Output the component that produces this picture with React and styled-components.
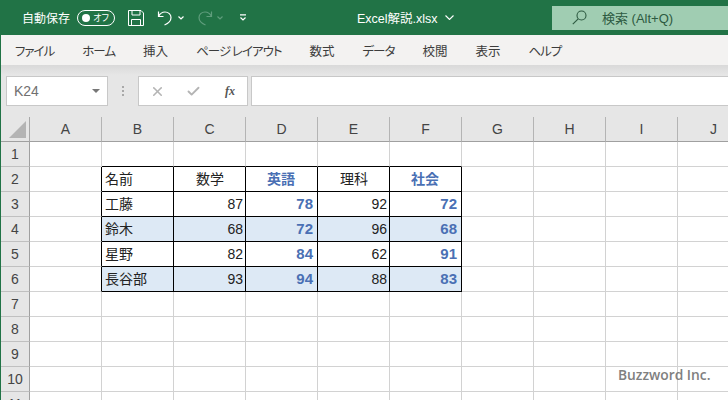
import React from 'react';
import styled, { createGlobalStyle } from 'styled-components';
import { X, Check } from 'lucide-react';

const GlobalStyle = createGlobalStyle`
  html, body {
    margin: 0;
    padding: 0;
    width: 728px;
    height: 400px;
    overflow: hidden;
    background: #fff;
    font-family: "Liberation Sans", "Noto Sans CJK JP", sans-serif;
  }
`;

const Page = styled.div`
  position: relative;
  width: 728px;
  height: 400px;
  overflow: hidden;
`;

const TitleBar = styled.div`
  display: flex;
  align-items: center;
  height: 35px;
  background: #217346;
  color: #fff;
`;

const AutoSave = styled.span`
  flex: none;
  width: 55px;
  margin-left: 22px;
  font: 12px "Noto Sans CJK JP", sans-serif;
`;

const Toggle = styled.div`
  flex: none;
  display: flex;
  align-items: center;
  justify-content: space-between;
  box-sizing: border-box;
  width: 38px;
  height: 16px;
  padding: 0 5px 0 4px;
  border: 1px solid #fff;
  border-radius: 8px;
  font: 9px "Noto Sans CJK JP", sans-serif;
  font-feature-settings: "palt";
  white-space: nowrap;
`;

const ToggleKnob = styled.i`
  width: 8px;
  height: 8px;
  border-radius: 50%;
  background: #fff;
`;

const QuickIcon = styled.svg`
  flex: none;
  margin-left: ${p => p.$left}px;
  color: ${p => (p.$dim ? '#5f9d7c' : '#fff')};
`;

const FileName = styled.div`
  flex: none;
  display: flex;
  align-items: center;
  gap: 7px;
  margin-left: 111px;
  width: 195px;
  font: 12.5px "Liberation Sans", "Noto Sans CJK JP", sans-serif;
`;

const SearchBox = styled.div`
  flex: none;
  display: flex;
  align-items: center;
  gap: 15px;
  box-sizing: border-box;
  width: 176px;
  height: 24px;
  padding-left: 20px;
  background: #a0cdb2;
  color: #2d5a41;
  font: 13px "Liberation Sans", "Noto Sans CJK JP", sans-serif;
`;

const Body = styled.div`
  border-left: 1px solid #217346;
`;

const Ribbon = styled.div`
  display: flex;
  align-items: center;
  gap: 28px;
  height: 30px;
  padding-left: 14px;
  background: #f3f2f1;
`;

const Tab = styled.span`
  font: 12.5px "Noto Sans CJK JP", sans-serif;
  font-feature-settings: "palt";
  letter-spacing: ${p => (p.$kana ? '-1px' : '0')};
  color: #3c3c3c;
  white-space: pre;
`;

const FormulaBar = styled.div`
  display: flex;
  align-items: stretch;
  height: 30px;
  padding: 11px 0 11px 5px;
  background: linear-gradient(#d9d9d9 0, #e6e6e6 10px);
`;

const NameBox = styled.div`
  display: flex;
  align-items: center;
  justify-content: space-between;
  box-sizing: border-box;
  width: 102px;
  padding: 0 7px 0 7px;
  background: #fff;
  border: 1px solid #c8c8c8;
  font-size: 14px;
  color: #707070;
`;

const Caret = styled.i`
  width: 0;
  height: 0;
  border-left: 4px solid transparent;
  border-right: 4px solid transparent;
  border-top: 4px solid #777;
`;

const Grip = styled.div`
  display: flex;
  flex-direction: column;
  justify-content: center;
  gap: 2px;
  width: 30px;
  align-items: center;
`;

const GripDot = styled.i`
  width: 2px;
  height: 2px;
  background: #a8a8a8;
`;

const FxBox = styled.div`
  display: flex;
  align-items: center;
  justify-content: space-between;
  box-sizing: border-box;
  width: 110px;
  padding: 0 12px 0 11px;
  background: #fff;
  border: 1px solid #c8c8c8;
  color: #b4b4b4;
`;

const CheckMark = styled(Check)`
  margin-left: -4px;
`;

const FxLabel = styled.span`
  font: italic bold 12px "Liberation Serif", serif;
  color: #555;
`;

const FormulaInput = styled.div`
  flex: 1;
  margin-left: 3px;
  background: #fff;
  border: 1px solid #c8c8c8;
  border-right: none;
`;

const Sheet = styled.div`
  display: grid;
  grid-template-columns: 29px repeat(10, 72px);
  grid-auto-rows: 25px;
  width: 727px;
  color: #222;
`;

const Corner = styled.div`
  background: #e6e6e6;
  border-right: 1px solid #a8a8a8;
  border-bottom: 1px solid #a0a0a0;
  box-sizing: border-box;
`;

const CornerMark = styled.svg`
  display: block;
  margin: 4px 0 0 8px;
`;

const ColHead = styled.div`
  display: flex;
  align-items: center;
  justify-content: center;
  box-sizing: border-box;
  background: #e6e6e6;
  border-right: 1px solid #b4b4b4;
  border-bottom: 1px solid #a0a0a0;
  font-size: 14px;
  color: #444;
`;

const RowHead = styled.div`
  display: flex;
  align-items: center;
  justify-content: center;
  box-sizing: border-box;
  background: #e6e6e6;
  border-right: 1px solid #a0a0a0;
  border-bottom: 1px solid #c0c0c0;
  font-size: 14px;
  color: #444;
`;

const Cell = styled.div`
  display: flex;
  align-items: center;
  justify-content: ${p => p.$align};
  box-sizing: border-box;
  padding: 0 ${p => (p.$accent ? 4 : 2)}px ${p => (p.$number ? 1 : 3)}px 3px;
  background: ${p => (p.$band ? '#dde9f5' : '#fff')};
  border-right: 1px solid ${p => (p.$edgeRight ? '#000' : '#d2d2d2')};
  border-bottom: 1px solid ${p => (p.$edgeBottom ? '#000' : '#d2d2d2')};
  font: ${p => (p.$accent ? 'bold' : 'normal')} ${p => (p.$accent && p.$number ? 15 : 14)}px "Liberation Sans", "Noto Sans CJK JP", sans-serif;
  color: ${p => (p.$accent ? '#4a70b4' : '#222')};
`;

const Watermark = styled.div`
  position: absolute;
  left: 618px;
  top: 365px;
  font: 600 13.8px "Open Sans", sans-serif;
  color: #808080;
`;

const tabs = [
  { label: 'ファイル', kana: true },
  { label: 'ホーム', kana: true },
  { label: '挿入' },
  { label: 'ページ レイアウト', kana: true },
  { label: '数式' },
  { label: 'データ', kana: true },
  { label: '校閲' },
  { label: '表示' },
  { label: 'ヘルプ', kana: true },
];
const columns = ['A', 'B', 'C', 'D', 'E', 'F', 'G', 'H', 'I', 'J'];
const rowNumbers = [1, 2, 3, 4, 5, 6, 7, 8, 9, 10, 11];

// B2:F6 の表
const table = [
  ['名前', '数学', '英語', '理科', '社会'],
  ['工藤', 87, 78, 92, 72],
  ['鈴木', 68, 72, 96, 68],
  ['星野', 82, 84, 62, 91],
  ['長谷部', 93, 94, 88, 83],
];

const cellProps = (row, col) => {
  const inRows = row >= 2 && row <= 6;
  const inCols = col >= 1 && col <= 5;
  const value = inRows && inCols ? table[row - 2][col - 1] : '';
  const isNumber = typeof value === 'number';
  return {
    value,
    $number: isNumber,
    $edgeRight: inRows && col <= 5,
    $edgeBottom: inCols && row >= 1 && row <= 6,
    $band: inCols && (row === 4 || row === 6),
    $accent: inRows && (col === 3 || col === 5),
    $align: isNumber ? 'flex-end' : row === 2 && col > 1 ? 'center' : 'flex-start',
  };
};

const App = () => (
  <Page>
    <GlobalStyle />
    <TitleBar>
      <AutoSave>自動保存</AutoSave>
      <Toggle><ToggleKnob />オフ</Toggle>
      <QuickIcon $left={13} width="16" height="16" viewBox="0 0 16 16" fill="none" stroke="currentColor">
        <path d="M.5.5h12.5l2.5 2.5v12.5H.5z" />
        <path d="M4 .5v4.5h8V.5M3.5 15.500V9.500h9v6" />
      </QuickIcon>
      <QuickIcon $left={13} width="16" height="16" viewBox="0 0 16 16" fill="none" stroke="currentColor" strokeWidth="1.2">
        <path d="M1.500 1.500v5h5M1.700 6.300C3 3.500 5.500 2 8 2c3.500 0 6 2.500 6 5.500 0 3-1.800 5.500-6.500 7.500" />
      </QuickIcon>
      <QuickIcon $left={5} width="6" height="4" viewBox="0 0 6 4" fill="none" stroke="currentColor" strokeWidth="1.2">
        <path d="M.5.5 3 3 5.500.5" />
      </QuickIcon>
      <QuickIcon $dim $left={13} width="16" height="16" viewBox="0 0 16 16" fill="none" stroke="currentColor" strokeWidth="1.2">
        <path d="M14.500 1.500v5h-5M14.300 6.300C13 3.500 10.500 2 8 2 4.500 2 2 4.500 2 7.500c0 3 1.800 5.500 6.500 7.500" />
      </QuickIcon>
      <QuickIcon $dim $left={4} width="6" height="4" viewBox="0 0 6 4" fill="none" stroke="currentColor" strokeWidth="1.2">
        <path d="M.5.5 3 3 5.500.5" />
      </QuickIcon>
      <QuickIcon $left={17} width="6" height="7" viewBox="0 0 6 7" fill="none" stroke="currentColor" strokeWidth="1.2">
        <path d="M0 .8h6M.5 3.500 3 6l2.500-2.500" />
      </QuickIcon>
      <FileName>
        <span>Excel解説.xlsx</span>
        <svg width="9" height="5" viewBox="0 0 9 5" fill="none" stroke="currentColor" strokeWidth="1.1">
          <path d="M.5.5l4 4 4-4" />
        </svg>
      </FileName>
      <SearchBox>
        <svg width="15" height="15" viewBox="0 0 15 15" fill="none" stroke="currentColor" strokeWidth="1.1">
          <circle cx="9.500" cy="5.500" r="4.500" />
          <path d="M6.200 8.800.8 14.200" />
        </svg>
        <span>検索 (Alt+Q)</span>
      </SearchBox>
    </TitleBar>
    <Body>
      <Ribbon>
        {tabs.map(tab => <Tab key={tab.label} $kana={tab.kana}>{tab.label}</Tab>)}
      </Ribbon>
      <FormulaBar>
        <NameBox>K24<Caret /></NameBox>
        <Grip><GripDot /><GripDot /><GripDot /></Grip>
        <FxBox>
          <X size={15} strokeWidth={2.5} />
          <CheckMark size={15} strokeWidth={3} />
          <FxLabel>fx</FxLabel>
        </FxBox>
        <FormulaInput />
      </FormulaBar>
      <Sheet>
        <Corner>
          <CornerMark width="17" height="17" viewBox="0 0 17 17"><path d="M17 0v17H0z" fill="#b4b4b4" /></CornerMark>
        </Corner>
        {columns.map(col => <ColHead key={col}>{col}</ColHead>)}
        {rowNumbers.map(row => (
          <React.Fragment key={row}>
            <RowHead>{row}</RowHead>
            {columns.map((col, colIndex) => {
              const { value, ...props } = cellProps(row, colIndex);
              return <Cell key={col} {...props}>{value}</Cell>;
            })}
          </React.Fragment>
        ))}
      </Sheet>
    </Body>
    <Watermark>Buzzword Inc.</Watermark>
  </Page>
);

export default App;
